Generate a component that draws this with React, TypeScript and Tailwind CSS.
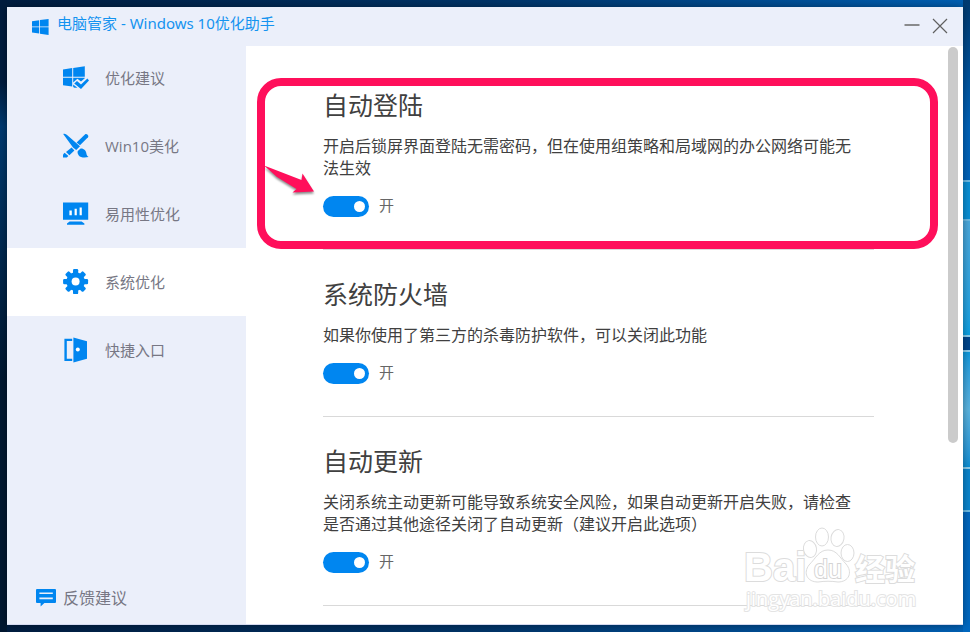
import { useState } from 'react';
import type { ReactNode } from 'react';
import clsx from 'clsx';

function WindowsLogo() {
  return (
    <svg width="17" height="16" viewBox="0 0 17 16" fill="#0086f0" aria-hidden="true">
      <path d="M0 2.2 7.2 1.2V7.4H0zM8 1.1 16.6 0V7.4H8zM0 8.2H7.2V14.6L0 13.6zM8 8.2H16.6V16L8 14.7z" />
    </svg>
  );
}

function SuggestIcon() {
  return (
    <svg width="26" height="26" viewBox="0 0 26 26" fill="#0086f0" aria-hidden="true">
      <path d="M0 4.4 9.2 3.1V11.8H0zM10.2 2.9 21.8 1.2V11.8H10.2zM0 12.8H9.2V21.4L0 20.2zM10.2 12.8H21.8V13.2L18 16.6 14.4 13.8 10.2 17.4z" />
      <path d="M11.2 18.4 14 16 18 19.6 24.4 13.6 26 15.600 18 24 11.2 18.4z" />
      <path d="M10.2 19.600 14.400 22.8H11.4L10.2 22z" />
    </svg>
  );
}

function BeautyIcon() {
  return (
    <svg width="26" height="26" viewBox="0 0 26 26" fill="#0086f0" aria-hidden="true">
      <path d="M.2 1C1.6.2 3 1 4.6 2.4L17 13.2 13.2 17 10 14.6z" />
      <path d="M14.8 18 17.6 15.6C21 15.4 23.2 18 23.4 20.6 23.6 22.2 24.2 23.2 25.6 24 21.6 24.8 17.4 24.6 15.8 22.4 14.8 21 14.2 19.4 14.8 18z" />
      <path d="M13.6 9.4 22.2 1.2C23.8.2 26.2 2.6 25 4.2L17 12.2z" />
      <path d="M8.6 14.6 11.4 17.4 6.4 22.2 3 19z" />
      <path d="M1.6 19.8 5.4 23 3.8 24.6H0V21.4z" />
    </svg>
  );
}

function UsabilityIcon() {
  return (
    <svg width="26" height="26" viewBox="0 0 26 26" aria-hidden="true">
      <path fill="#0086f0" d="M0 1.4H25.2V18.8H0zM6.6 20.6H18.6L21.4 22.4V23.8H4V22.4z" />
      <path fill="#fff" d="M6.4 9.4h2.4v4.8H6.4zM11.6 7.8h2.2v6.4h-2.2zM16.6 6.4h2.2v7.8h-2.2z" />
    </svg>
  );
}

function GearIcon() {
  return (
    <svg width="26" height="26" viewBox="0 0 26 26" aria-hidden="true">
      <g fill="#0086f0" transform="translate(12.6 12.6)">
        <circle r="9.3" />
        <rect x="-2.6" y="-12.5" width="5.2" height="25" rx="1.2" />
        <rect x="-2.6" y="-12.5" width="5.2" height="25" rx="1.2" transform="rotate(45)" />
        <rect x="-2.6" y="-12.5" width="5.2" height="25" rx="1.2" transform="rotate(90)" />
        <rect x="-2.6" y="-12.5" width="5.2" height="25" rx="1.2" transform="rotate(135)" />
      </g>
      <circle cx="12.6" cy="12.6" r="4" fill="#fff" />
    </svg>
  );
}

function EntryIcon() {
  return (
    <svg width="26" height="26" viewBox="0 0 26 26" aria-hidden="true">
      <path fill="#0086f0" d="M1.4 1.8H9.2V4H3.8V21.8H9.2V24H1.4z" />
      <path fill="#0086f0" d="M10.4.6 24 4.2V21.8L10.4 25.4z" />
      <circle cx="14.8" cy="12.4" r="2" fill="#fff" />
    </svg>
  );
}

function FeedbackIcon() {
  return (
    <svg width="20" height="18" viewBox="0 0 20 18" aria-hidden="true">
      <path fill="#0086f0" d="M1 0H19Q20 0 20 1V13Q20 14 19 14H8.4L4.6 17.6V14H1Q0 14 0 13V1Q0 0 1 0z" />
      <path fill="#ebeffa" d="M3.4 3.4h13.4v1.6H3.4zM3.4 8.6h13.4v1.6H3.4z" />
    </svg>
  );
}

const navItems: { name: string; icon: ReactNode }[] = [
  { name: '优化建议', icon: <SuggestIcon /> },
  { name: 'Win10美化', icon: <BeautyIcon /> },
  { name: '易用性优化', icon: <UsabilityIcon /> },
  { name: '系统优化', icon: <GearIcon /> },
  { name: '快捷入口', icon: <EntryIcon /> },
];

const settings = [
  {
    id: 'auto-login',
    title: '自动登陆',
    text: '开启后锁屏界面登陆无需密码，但在使用组策略和局域网的办公网络可能无法生效',
    marked: true,
  },
  {
    id: 'firewall',
    title: '系统防火墙',
    text: '如果你使用了第三方的杀毒防护软件，可以关闭此功能',
    marked: false,
  },
  {
    id: 'auto-update',
    title: '自动更新',
    text: '关闭系统主动更新可能导致系统安全风险，如果自动更新开启失败，请检查是否通过其他途径关闭了自动更新（建议开启此选项）',
    marked: false,
  },
];

function Toggle({ id, title }: { id: string; title: string }) {
  const [on, setOn] = useState(true);
  return (
    <div className="mt-[17px] flex h-[21px] items-start gap-2.5">
      <input
        id={id}
        type="checkbox"
        role="switch"
        aria-label={title}
        checked={on}
        onChange={(e) => setOn(e.target.checked)}
        className="flex h-[21px] w-[46px] cursor-pointer appearance-none items-center rounded-full bg-gray-400 px-1 before:size-[11px] before:rounded-full before:bg-white checked:justify-end checked:bg-[#0086f0]"
      />
      <label htmlFor={id} className="text-[15px] leading-[18px] text-[#666]">
        {on ? '开' : '关'}
      </label>
    </div>
  );
}

/* Red frame and arrow laid over a section */
function Marker() {
  return (
    <>
      <div className="pointer-events-none absolute -left-[66px] -right-16 top-[17px] bottom-0 rounded-3xl border-8 border-[#ff0f5b]" />
      <svg
        className="pointer-events-none absolute -left-[60px] top-[103px]"
        width="56"
        height="36"
        viewBox="0 0 56 36"
        aria-hidden="true"
      >
        <path
          className="drop-shadow-[0_2px_1px_rgba(0,0,0,0.45)]"
          fill="#ff0f5b"
          d="M1 1.5 38.5 16 39.5 9.5 51 27.5 29.5 28.5 33.5 25 14 13z"
        />
      </svg>
    </>
  );
}

function Watermark() {
  return (
    <svg
      className="pointer-events-none absolute bottom-2.5 right-[43px]"
      width="180"
      height="90"
      viewBox="0 0 180 90"
      fill="#fff"
      stroke="#dcdcdc"
      strokeWidth="2"
      aria-hidden="true"
    >
      <g className="[paint-order:stroke]">
        <text x="4" y="57" className="font-['Liberation_Sans',sans-serif] text-[40px] font-bold">Bai</text>
        <text x="115" y="56" className="font-['Noto_Sans_CJK_SC',sans-serif] text-[30px] font-bold">经验</text>
        <text x="6" y="82" stroke="#e4e4e4" className="font-['Open_Sans',sans-serif] text-[20px]">jingyan.baidu.com</text>
      </g>
      <g strokeWidth="1">
        <ellipse cx="70" cy="25" rx="6.5" ry="8.5" transform="rotate(-10 70 25)" />
        <ellipse cx="82" cy="13" rx="6.5" ry="9" />
        <ellipse cx="97.5" cy="14" rx="6.5" ry="8.5" transform="rotate(10 97.5 14)" />
        <ellipse cx="107.5" cy="29" rx="6.5" ry="8.5" />
        <path d="M88 26C97 26 100 34 106 40 113 48 109 58 98 58 91 57 85 57 78 58 67 58 63 49 69 41 76 34 79 26 88 26z" />
      </g>
      <text x="74" y="54" stroke="#d4d4d4" className="font-['Liberation_Sans',sans-serif] text-[25px] [paint-order:stroke]">du</text>
    </svg>
  );
}

export default function App() {
  const [active, setActive] = useState('系统优化');

  return (
    <div className="flex min-h-screen bg-linear-to-r from-[#001d40] via-[#003468] to-[#0060b4] font-['Open_Sans','Noto_Sans_CJK_SC',sans-serif]">
      {/* Desktop edge, left */}
      <div className="w-[7px] bg-linear-to-b from-[#001c3e] from-13% via-[#003a70] via-20% to-[#001730] to-60%" />

      <div className="flex min-w-0 flex-1 flex-col py-[7px]">
        <div className="relative flex flex-1 flex-col border-b border-[#d5daf0] bg-[#ebeffa] shadow-[0_0_8px_rgba(0,0,0,0.4)]">
          <header className="flex h-[37px] items-center justify-between pl-[25px] pr-[15px]">
            <div className="flex items-start gap-2 self-start pt-1.5">
              <span className="pt-1.5">
                <WindowsLogo />
              </span>
              <h1 className="font-['Noto_Sans','Noto_Sans_CJK_SC',sans-serif] text-[15px] leading-5 text-[#1493f0]">
                电脑管家 - Windows 10优化助手
              </h1>
            </div>
            <div className="flex items-center gap-3">
              <button type="button" aria-label="最小化" className="cursor-pointer">
                <svg width="16" height="16" viewBox="0 0 16 16" stroke="#707070" strokeWidth="1.6">
                  <path d="M.5 7H15.5" />
                </svg>
              </button>
              <button type="button" aria-label="关闭" className="cursor-pointer">
                <svg width="16" height="16" viewBox="0 0 16 16" stroke="#606060" strokeWidth="1.2">
                  <path d="M1 1 15 15M15 1 1 15" />
                </svg>
              </button>
            </div>
          </header>

          <div className="flex flex-1">
            <aside className="flex w-[239px] shrink-0 flex-col justify-between">
              <nav>
                {navItems.map((item) => (
                  <button
                    key={item.name}
                    type="button"
                    onClick={() => setActive(item.name)}
                    className={clsx(
                      'flex h-[68px] w-full cursor-pointer items-center gap-4 pl-14 text-[15px] leading-5 text-[#777784]',
                      active === item.name && 'bg-white',
                    )}
                  >
                    {item.icon}
                    {item.name}
                  </button>
                ))}
              </nav>
              <a href="#feedback" className="flex items-center gap-[7px] pb-3.5 pl-[29px] text-base text-[#777784]">
                <FeedbackIcon />
                反馈建议
              </a>
            </aside>

            <main className="mt-0.5 flex min-w-0 flex-1 items-start bg-white">
              <div className="min-w-0 flex-1 pl-[77px] pr-[74px] pt-[15px]">
                {settings.map((item) => (
                  <section key={item.id} className="relative border-b border-[#d9d9d9] pb-8 pt-7">
                    <h2 className="text-[25px] leading-8 text-[#404040]">{item.title}</h2>
                    <p className="mt-3.5 pr-3.5 text-base leading-[22px] text-[#404040]">{item.text}</p>
                    <Toggle id={item.id} title={item.title} />
                    {item.marked && <Marker />}
                  </section>
                ))}
              </div>
              {/* Scroll thumb */}
              <div className="mr-[5px] mt-px h-[396px] w-2.5 rounded-full bg-[#cbcbcb]" />
            </main>
          </div>

          <Watermark />
        </div>
      </div>

      {/* Desktop edge, right */}
      <div className="flex w-[7px] flex-col bg-linear-to-b from-[#003a70] via-[#0062b8] via-20% to-[#0068c0]">
        <div className="h-[180px]" />
        <div className="h-[41px] border-y-2 border-[#6cbbe4] bg-[#0a8fd4]" />
        <div className="h-[116px] border-b-2 border-[#8ccdec] bg-linear-to-b from-[#4aa8dc] to-[#0a9fe0]" />
        <div className="h-[13px] bg-[#00468c]" />
        <div className="h-[119px] border-y-2 border-[#8ccdec] bg-linear-to-b from-[#0a98dc] via-[#5ab4e0] to-[#0a8fd4]" />
        <div className="h-[43px] border-b-2 border-[#6cbbe4] bg-[#0a84cc]" />
      </div>
    </div>
  );
}
